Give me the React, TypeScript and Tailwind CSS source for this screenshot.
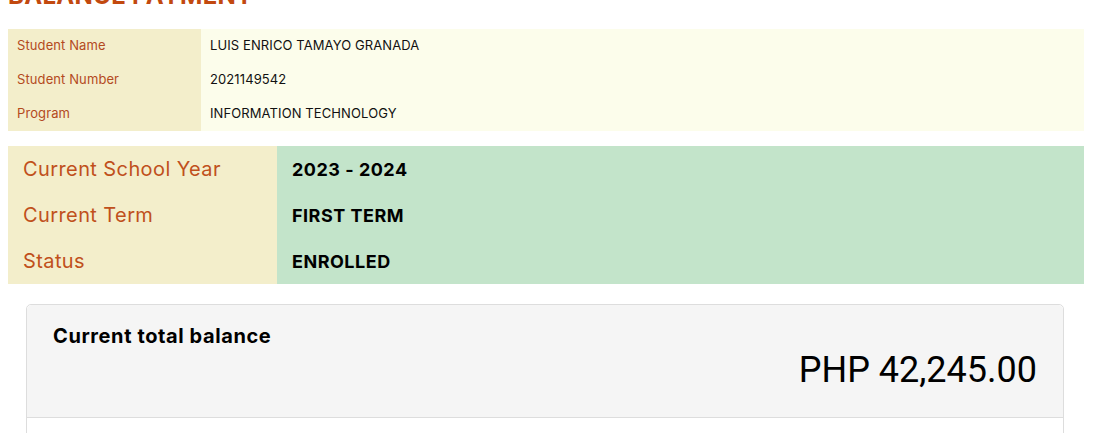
import React from "react";

const font = { fontFamily: "Inter, 'Noto Sans', sans-serif" };

export default function App() {
  return (
    <div className="min-h-[433px] bg-white pl-2 pr-[14px] overflow-hidden" style={font}>
      <h2 className="text-[24px] leading-[24px] font-bold text-[#c2490f] mt-[-16px] mb-[21px] tracking-[0.3px]">
        BALANCE PAYMENT
      </h2>

      <div className="flex flex-col text-[13px]">
        {[
          ["Student Name", "LUIS ENRICO TAMAYO GRANADA"],
          ["Student Number", "2021149542"],
          ["Program", "INFORMATION TECHNOLOGY"],
        ].map(([k, v]) => (
          <div key={k} className="flex h-[34px]">
            <div className="w-[193px] bg-[#f3eecb] pl-[9px] flex items-center text-[#b34a1e] tracking-[0.1px]">{k}</div>
            <div className="flex-1 bg-[#fcfdeb] pl-[9px] flex items-center text-[#111] tracking-[0.1px]">{v}</div>
          </div>
        ))}
      </div>

      <div className="flex flex-col mt-[15px]">
        {[
          ["Current School Year", "2023 - 2024"],
          ["Current Term", "FIRST TERM"],
          ["Status", "ENROLLED"],
        ].map(([k, v]) => (
          <div key={k} className="flex h-[46px]">
            <div className="w-[269px] bg-[#f3eecb] pl-[15px] flex items-center text-[20px] text-[#c0501c] tracking-[0.4px]">{k}</div>
            <div className="flex-1 bg-[#c3e4ca] pl-[15px] flex items-center text-[18px] font-bold text-black tracking-[0.5px]">{v}</div>
          </div>
        ))}
      </div>

      <div className="mt-[20px] ml-[18px] mr-[20px] border border-[#dddddd] rounded-[5px] bg-white min-h-[140px]">
        <div className="bg-[#f5f5f5] border-b border-[#dddddd] h-[113px] rounded-t-[5px] pl-[26px] pr-[26px] pt-[17px] flex flex-col">
          <div className="text-[20px] leading-[28px] font-bold text-black tracking-[0.6px]">Current total balance</div>
          <div
            className="self-end mt-[0px] text-[36px] leading-[40px] text-black"
            style={{ fontFamily: "Roboto, 'Liberation Sans', sans-serif" }}
          >
            PHP 42,245.00
          </div>
        </div>
      </div>
    </div>
  );
}
